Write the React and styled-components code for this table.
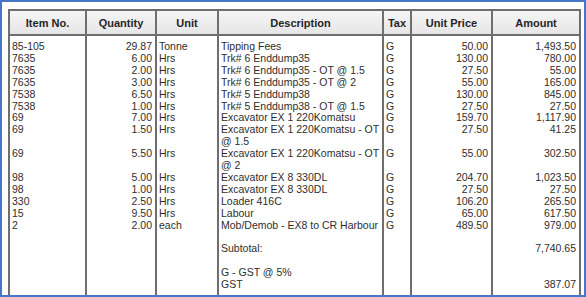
import React from 'react';
import styled, { createGlobalStyle } from 'styled-components';

const GlobalStyle = createGlobalStyle`
  html, body {
    margin: 0;
    padding: 0;
    background: #ffffff;
  }
`;

const Frame = styled.div`
  width: 586px;
  height: 297px;
  box-sizing: border-box;
  border: 2px solid #4676c9;
  padding: 7px 6px 0 6px;
  overflow: hidden;
  background: #ffffff;
  font-family: 'Liberation Sans', Arial, sans-serif;
`;

const Table = styled.table`
  width: 571px;
  height: 320px;
  border-collapse: collapse;
  table-layout: fixed;
  border: 2px solid #6e6e6e;
  color: #2e2e2e;
`;

const HeadCell = styled.th`
  height: 23px;
  padding: 0;
  background: linear-gradient(#f5f5f5, #e6e6e6);
  border: 2px solid #6e6e6e;
  font-size: 11px;
  font-weight: 700;
  text-align: center;
  vertical-align: middle;
  color: #262626;
`;

const Cell = styled.td`
  padding: 0 ${({ $align }) => ($align === 'right' ? '3px' : '0')} 0
    ${({ $align }) => ($align === 'right' ? '0' : '2px')};
  border-left: 2px solid #6e6e6e;
  border-right: 2px solid #6e6e6e;
  font-size: 10.5px;
  line-height: 11.9px;
  height: 11.9px;
  vertical-align: top;
  text-align: ${({ $align }) => $align || 'left'};
  white-space: ${({ $wrap }) => ($wrap ? 'normal' : 'nowrap')};
`;

const SpacerCell = styled.td`
  height: ${({ $h }) => $h}px;
  padding: 0;
  border-left: 2px solid #6e6e6e;
  border-right: 2px solid #6e6e6e;
`;

const columns = [
  { key: 'item', label: 'Item No.', width: 77 },
  { key: 'qty', label: 'Quantity', width: 70, align: 'right' },
  { key: 'unit', label: 'Unit', width: 62 },
  { key: 'desc', label: 'Description', width: 165, wrap: true },
  { key: 'tax', label: 'Tax', width: 28 },
  { key: 'price', label: 'Unit Price', width: 81, align: 'right' },
  { key: 'amount', label: 'Amount', width: 88, align: 'right' },
];

const lines = [
  ['85-105', '29.87', 'Tonne', 'Tipping Fees', 'G', '50.00', '1,493.50'],
  ['7635', '6.00', 'Hrs', 'Trk# 6 Enddump35', 'G', '130.00', '780.00'],
  ['7635', '2.00', 'Hrs', 'Trk# 6 Enddump35 - OT @ 1.5', 'G', '27.50', '55.00'],
  ['7635', '3.00', 'Hrs', 'Trk# 6 Enddump35 - OT @ 2', 'G', '55.00', '165.00'],
  ['7538', '6.50', 'Hrs', 'Trk# 5 Enddump38', 'G', '130.00', '845.00'],
  ['7538', '1.00', 'Hrs', 'Trk# 5 Enddump38 - OT @ 1.5', 'G', '27.50', '27.50'],
  ['69', '7.00', 'Hrs', 'Excavator EX 1 220Komatsu', 'G', '159.70', '1,117.90'],
  ['69', '1.50', 'Hrs', 'Excavator EX 1 220Komatsu - OT @ 1.5', 'G', '27.50', '41.25'],
  ['69', '5.50', 'Hrs', 'Excavator EX 1 220Komatsu - OT @ 2', 'G', '55.00', '302.50'],
  ['98', '5.00', 'Hrs', 'Excavator EX 8 330DL', 'G', '204.70', '1,023.50'],
  ['98', '1.00', 'Hrs', 'Excavator EX 8 330DL', 'G', '27.50', '27.50'],
  ['330', '2.50', 'Hrs', 'Loader 416C', 'G', '106.20', '265.50'],
  ['15', '9.50', 'Hrs', 'Labour', 'G', '65.00', '617.50'],
  ['2', '2.00', 'each', 'Mob/Demob - EX8 to CR Harbour', 'G', '489.50', '979.00'],
  ['', '', '', '', '', '', ''],
  ['', '', '', 'Subtotal:', '', '', '7,740.65'],
  ['', '', '', '', '', '', ''],
  ['', '', '', 'G - GST @ 5%', '', '', ''],
  ['', '', '', 'GST', '', '', '387.07'],
];

export default function App() {
  return (
    <>
      <GlobalStyle />
      <Frame>
        <Table>
          <colgroup>
            {columns.map((c) => (
              <col key={c.key} style={{ width: c.width }} />
            ))}
          </colgroup>
          <thead>
            <tr>
              {columns.map((c) => (
                <HeadCell key={c.key}>{c.label}</HeadCell>
              ))}
            </tr>
          </thead>
          <tbody>
            <tr>
              {columns.map((c) => (
                <SpacerCell key={c.key} $h={5} />
              ))}
            </tr>
            {lines.map((row, i) => (
              <tr key={i}>
                {row.map((val, j) => (
                  <Cell key={j} $align={columns[j].align} $wrap={columns[j].wrap}>
                    {val || '\u00a0'}
                  </Cell>
                ))}
              </tr>
            ))}
            <tr>
              {columns.map((c) => (
                <SpacerCell key={c.key} $h={40} />
              ))}
            </tr>
          </tbody>
        </Table>
      </Frame>
    </>
  );
}
